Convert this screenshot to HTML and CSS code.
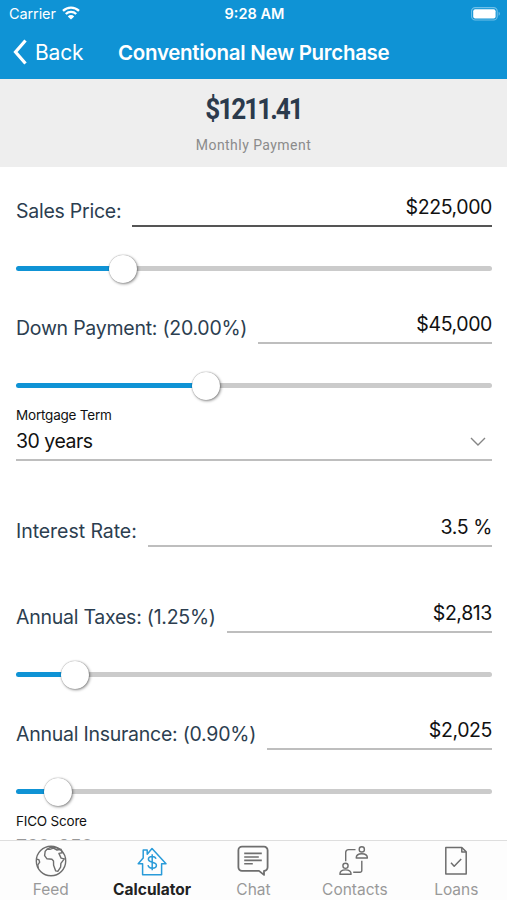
FILE: index.html
```html
<!DOCTYPE html>
<html lang="en">
<head>
    <meta charset="UTF-8">
    <meta name="viewport" content="width=device-width, initial-scale=1.0">
    <title>Conventional New Purchase</title>
    <link rel="stylesheet" href="styles.css">
</head>
<body>
    <div class="app">
        <header class="header">
            <div class="status-bar">
                <div class="carrier">
                    <span>Carrier</span>
                    <svg class="wifi" width="18" height="14" viewBox="0 0 18 14">
                        <path d="M1 4.9a11.4 11.4 0 0 1 16 0M3.8 8a7.4 7.4 0 0 1 10.4 0" fill="none" stroke="#fff" stroke-width="2.3"/>
                        <path d="M9 13.6 5.8 10.4a4.6 4.6 0 0 1 6.4 0z" fill="#fff"/>
                    </svg>
                </div>
                <span class="time">9:28 AM</span>
                <svg class="battery" width="30" height="14" viewBox="0 0 30 14">
                    <rect x="0.6" y="0.6" width="25.6" height="12.4" rx="3.6" fill="none" stroke="#6fc0e8" stroke-width="1.1"/>
                    <rect x="2.2" y="2.2" width="22.4" height="9.2" rx="2" fill="#fff"/>
                    <path d="M27.6 4.8v4a2.2 2.2 0 0 0 0-4z" fill="#6fc0e8"/>
                </svg>
            </div>
            <div class="nav-bar">
                <a class="back">
                    <svg width="15" height="28" viewBox="0 0 15 28">
                        <path d="M12.5 2.5 2.5 14l10 11.5" fill="none" stroke="#fff" stroke-width="3.2"/>
                    </svg>
                    <span>Back</span>
                </a>
                <h1 class="title">Conventional New Purchase</h1>
            </div>
        </header>

        <section class="summary">
            <div class="amount">$1211.41</div>
            <div class="amount-label">Monthly Payment</div>
        </section>

        <main class="form">
            <div class="field-row">
                <label>Sales Price:</label>
                <div class="value active">$225,000</div>
            </div>
            <div class="slider">
                <div class="fill" style="width: 22.5%"></div>
                <div class="thumb"></div>
                <div class="track"></div>
            </div>

            <div class="field-row">
                <label>Down Payment: (20.00%)</label>
                <div class="value">$45,000</div>
            </div>
            <div class="slider">
                <div class="fill" style="width: 40%"></div>
                <div class="thumb"></div>
                <div class="track"></div>
            </div>

            <div class="select">
                <div class="select-label">Mortgage Term</div>
                <div class="select-value">
                    <span>30 years</span>
                    <svg width="16" height="10" viewBox="0 0 16 10">
                        <path d="M1 1l7 7 7-7" fill="none" stroke="#858585" stroke-width="1.4"/>
                    </svg>
                </div>
            </div>

            <div class="field-row spaced">
                <label class="label-rate">Interest Rate:</label>
                <div class="value">3.5 %</div>
            </div>

            <div class="field-row spaced">
                <label>Annual Taxes: (1.25%)</label>
                <div class="value">$2,813</div>
            </div>
            <div class="slider">
                <div class="fill" style="width: 12.4%"></div>
                <div class="thumb"></div>
                <div class="track"></div>
            </div>

            <div class="field-row">
                <label>Annual Insurance: (0.90%)</label>
                <div class="value">$2,025</div>
            </div>
            <div class="slider">
                <div class="fill" style="width: 8.9%"></div>
                <div class="thumb"></div>
                <div class="track"></div>
            </div>

            <div class="select">
                <div class="select-label">FICO Score</div>
                <div class="select-value muted">
                    <span>760-850</span>
                </div>
            </div>
        </main>

        <nav class="tab-bar">
            <a class="tab">
                <svg width="34" height="34" viewBox="0 0 34 34" fill="none" stroke="#6e6e6e" stroke-width="1.4" stroke-linejoin="round">
                    <circle cx="17" cy="17" r="14.7"/>
                    <path d="M13 5.3 11.2 7.2 10.6 11.6l2.4 3.2 4.9.4 1.6 1.8.1 4.3 2.1 5.6 2.3.3 2.6-4 .3-3.8 3.4-4.5-3.2-.8-2.2-4.7 3.4-.6-1.3-3.6-4 .8-3.6-1.8-3.5 1.2z"/>
                    <path d="M2.6 15.2l2.2.4.9 2.6-1.9 2.6.4 3.3M13 5.3l4-2.2 6 .7 3.4 2.1"/>
                </svg>
                <span>Feed</span>
            </a>
            <a class="tab selected">
                <svg width="34" height="34" viewBox="0 0 34 34" fill="none" stroke="#299bd9" stroke-width="1.5" stroke-linejoin="round">
                    <path d="M7.6 19.8H3.2L8.2 14V6h4v4.2L17 4.5l14 15.3h-4.4v10.9h-19z"/>
                    <path d="M21 14.8c-.5-1.7-1.8-2.4-3.8-2.4-2.2 0-3.8 1-3.8 2.8 0 4.1 8 1.8 8 6 0 1.9-1.6 3-4.1 3-2.4 0-3.9-1-4.3-3M17.2 10.2v16.1"/>
                </svg>
                <span>Calculator</span>
            </a>
            <a class="tab">
                <svg width="34" height="34" viewBox="0 0 34 34" fill="none" stroke="#6e6e6e" stroke-width="1.8" stroke-linejoin="round">
                    <path d="M6 2.7h22a3.6 3.6 0 0 1 3.6 3.6v17a3.6 3.6 0 0 1-3.6 3.6v4l-5-4H6a3.6 3.6 0 0 1-3.6-3.6v-17A3.6 3.6 0 0 1 6 2.7z"/>
                    <path d="M8.2 9.4h17.6M8.2 13h14.6M8.2 16.4h17.6M8.2 19.8h8.6" stroke-width="1.6"/>
                </svg>
                <span>Chat</span>
            </a>
            <a class="tab">
                <svg width="34" height="34" viewBox="0 0 34 34" fill="none" stroke="#6e6e6e" stroke-width="1.4" stroke-linejoin="round">
                    <path d="M17.5 5.6H10.700a3 3 0 0 0-3 3v8.600M23.800 16.800v9.600a1.800 1.800 0 0 1-1.800 1.800h-6.800"/>
                    <circle cx="23.8" cy="5.4" r="2.6"/>
                    <path d="M18.2 14c0-3 2.400-4.300 5.600-4.300s5.600 1.300 5.600 4.300z"/>
                    <circle cx="7.500" cy="21.800" r="2.600"/>
                    <path d="M1.900 30.200c0-3 2.400-4.300 5.600-4.300s5.600 1.300 5.600 4.300z"/>
                </svg>
                <span>Contacts</span>
            </a>
            <a class="tab">
                <svg width="34" height="34" viewBox="0 0 34 34" fill="none" stroke="#6e6e6e" stroke-width="1.5" stroke-linejoin="round">
                    <path d="M6.800 3.500h16l4.400 4.400v22H6.800z"/>
                    <path d="M22.800 3.700v4.200h4.200M12 18.800l3.200 3.500 7-7.200"/>
                </svg>
                <span>Loans</span>
            </a>
        </nav>
    </div>
</body>
</html>
```
FILE: styles.css
```css
body {
    margin: 0;
    font-family: Inter, "Liberation Sans", sans-serif;
    background: #fff;
}
.app {
    display: flex;
    flex-direction: column;
    height: 900px;
    overflow: hidden;
}

/* header */
.header {
    box-sizing: border-box;
    height: 79px;
    flex-shrink: 0;
    background: #0f93d5;
    color: #fff;
}
.status-bar {
    display: grid;
    grid-template-columns: 1fr auto 1fr;
    align-items: center;
    height: 27px;
    padding: 0 7px 0 9px;
    font-size: 14.5px;
}
.carrier {
    display: flex;
    align-items: center;
    gap: 6px;
    letter-spacing: -0.1px;
}
.wifi {
    margin-top: -2px;
}
.time {
    font-weight: 600;
}
.battery {
    justify-self: end;
    margin-right: -1px;
}
.nav-bar {
    display: grid;
    grid-template-columns: 118px 1fr;
    align-items: center;
    height: 50px;
}
.back {
    display: flex;
    align-items: center;
    gap: 7px;
    padding-left: 13px;
    font-size: 21px;
    letter-spacing: -0.2px;
}
.title {
    margin: 0;
    font-size: 20.5px;
    font-weight: 600;
    letter-spacing: -0.3px;
    white-space: nowrap;
}

/* payment summary */
.summary {
    box-sizing: border-box;
    height: 88px;
    flex-shrink: 0;
    padding-top: 12px;
    background: #eee;
    text-align: center;
    font-family: Roboto, sans-serif;
}
.amount {
    line-height: 36px;
    font-size: 29px;
    font-weight: 700;
    letter-spacing: -2.2px;
    color: #2b3a4c;
    transform: scaleX(0.9);
}
.amount-label {
    margin-top: 8px;
    line-height: 20px;
    font-size: 14px;
    letter-spacing: 0.45px;
    color: #8b8b8b;
}

/* form */
.form {
    flex: 1;
    min-height: 0;
    padding: 0 15px 0 16px;
    overflow: hidden;
}
.field-row {
    display: flex;
    align-items: flex-end;
    gap: 11px;
    height: 60px;
}
.spaced {
    margin-top: 26px;
}
.field-row label {
    padding-bottom: 3px;
    line-height: 26px;
    font-size: 19.5px;
    letter-spacing: -0.25px;
    color: #2c3e50;
    white-space: nowrap;
}
.field-row .label-rate {
    letter-spacing: -0.05px;
}
.value {
    flex: 1;
    padding-bottom: 4px;
    border-bottom: 2px solid #bebebe;
    line-height: 28px;
    font-size: 19.5px;
    letter-spacing: -0.4px;
    text-align: right;
    color: #111;
}
.active {
    border-color: #555;
}
.slider {
    box-sizing: border-box;
    display: flex;
    align-items: center;
    height: 57px;
    padding-top: 26px;
}
.fill {
    height: 5px;
    border-radius: 3px 0 0 3px;
    background: #0f93d5;
}
.thumb {
    width: 28px;
    height: 28px;
    margin: 0 -14px;
    flex-shrink: 0;
    border-radius: 50%;
    background: #fff;
    box-shadow: 0 0 1px rgba(0, 0, 0, 0.45), 1px 1px 3px rgba(0, 0, 0, 0.45);
    z-index: 1;
}
.track {
    flex: 1;
    height: 5px;
    border-radius: 0 3px 3px 0;
    background: #cbcbcb;
}
.select {
    box-sizing: border-box;
    height: 60px;
    padding-top: 4px;
    border-bottom: 2px solid #bebebe;
}
.select-label {
    line-height: 20px;
    font-size: 13.5px;
    letter-spacing: -0.2px;
    color: #111;
}
.select-value {
    display: flex;
    justify-content: space-between;
    align-items: center;
    padding-right: 6px;
    line-height: 33px;
    font-size: 19.5px;
    letter-spacing: -0.5px;
    color: #111;
}
.muted {
    color: #999;
}

/* bottom tabs */
.tab-bar {
    box-sizing: border-box;
    display: grid;
    grid-template-columns: repeat(5, 1fr);
    height: 60px;
    flex-shrink: 0;
    border-top: 1px solid #dedede;
    background: #fdfdfd;
}
.tab {
    display: flex;
    flex-direction: column;
    align-items: center;
    padding-top: 3px;
    font-size: 15.5px;
    line-height: 23px;
    color: #999;
}
.tab svg {
    overflow: visible;
}
.selected {
    font-weight: 700;
    color: #222;
}
```
